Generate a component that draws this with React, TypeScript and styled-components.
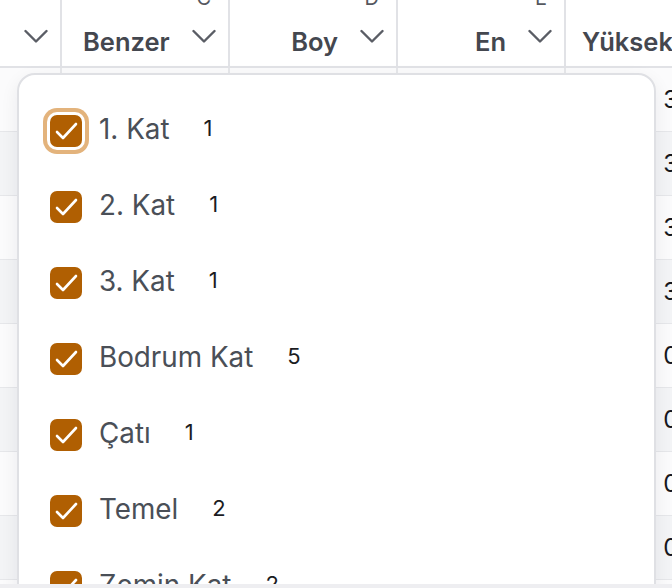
import React from 'react';
import styled, { createGlobalStyle } from 'styled-components';

const GlobalStyle = createGlobalStyle`
  html, body {
    margin: 0;
    padding: 0;
    background: #ffffff;
    overflow: hidden;
    font-family: Inter, "Noto Sans", "Liberation Sans", sans-serif;
  }
`;

interface Column {
  letter: string;
  title: string;
  width: number;
  align: 'left' | 'right';
  pad: number;
}

const columns: Column[] = [
  { letter: 'B', title: '', width: 62, align: 'right', pad: 0 },
  { letter: 'C', title: 'Benzer', width: 168, align: 'left', pad: 21 },
  { letter: 'D', title: 'Boy', width: 168, align: 'right', pad: 21 },
  { letter: 'E', title: 'En', width: 168, align: 'right', pad: 21 },
  { letter: 'F', title: 'Yükseklik', width: 168, align: 'left', pad: 16 }
];

const heights = ['3.00', '3.00', '3.00', '3.00', '0.50', '0.50', '0.50', '0.50', '0.50'];

const floors = [
  { label: '1. Kat', count: 1 },
  { label: '2. Kat', count: 1 },
  { label: '3. Kat', count: 1 },
  { label: 'Bodrum Kat', count: 5 },
  { label: 'Çatı', count: 1 },
  { label: 'Temel', count: 2 },
  { label: 'Zemin Kat', count: 2 }
];

const Page = styled.div`
  position: relative;
  width: 672px;
  height: 588px;
  overflow: hidden;
`;

const Sheet = styled.div`
  margin-top: -14px;
  width: 900px;
`;

const HeaderRow = styled.div`
  display: flex;
  border-bottom: 2px solid #e1e2e6;
`;

const HeaderCell = styled.div<{ $w: number }>`
  flex: 0 0 ${p => p.$w}px;
  min-width: 0;
  height: 80px;
  box-sizing: border-box;
  border-right: 2px solid #e1e2e6;
  display: flex;
  flex-direction: column;
  overflow: hidden;
`;

const Letter = styled.div`
  height: 24px;
  line-height: 24px;
  font-size: 20px;
  color: #55585f;
  text-align: right;
  padding-right: 17px;
`;

const TitleRow = styled.div<{ $align: 'left' | 'right'; $pad: number }>`
  flex: 1;
  display: flex;
  align-items: center;
  padding: 6px 12px 0 ${p => p.$pad}px;
  gap: 22px;
  justify-content: ${p => (p.$align === 'right' ? 'flex-end' : 'space-between')};
`;

const Title = styled.span<{ $align: 'left' | 'right' }>`
  font-size: 25.5px;
  font-weight: 600;
  color: #44474f;
  white-space: nowrap;
  flex: ${p => (p.$align === 'left' ? 1 : '0 0 auto')};
`;

const Chevron = styled.svg`
  flex: 0 0 auto;
  width: 24px;
  height: 24px;
  margin-bottom: 10px;
  color: #5a5d65;
`;

const BodyRow = styled.div<{ $alt: boolean }>`
  display: flex;
  height: 64px;
  box-sizing: border-box;
  border-bottom: 1px solid #e6e7ea;
  background: ${p => (p.$alt ? '#f3f4f6' : '#fbfbfc')};
`;

const BodyCell = styled.div<{ $w: number }>`
  flex: 0 0 ${p => p.$w}px;
  min-width: 0;
  box-sizing: border-box;
  border-right: 2px solid #e6e7ea;
  display: flex;
  align-items: center;
  justify-content: flex-end;
  padding-right: 18px;
  font-size: 24px;
  color: #16181d;
`;

const Popover = styled.div`
  position: absolute;
  top: 73px;
  left: 17px;
  width: 639px;
  height: 620px;
  box-sizing: border-box;
  background: #ffffff;
  border: 2px solid #dfe0e4;
  border-radius: 18px;
  box-shadow: 0 6px 18px rgba(20, 24, 40, 0.07);
  padding: 18px 0 0 31px;
`;

const Option = styled.label`
  display: flex;
  align-items: center;
  height: 76px;
`;

const Box = styled.span<{ $focused?: boolean }>`
  flex: 0 0 32px;
  width: 32px;
  height: 32px;
  border-radius: 7px;
  background: #b05f02;
  display: flex;
  align-items: center;
  justify-content: center;
  box-shadow: ${p =>
    p.$focused ? '0 0 0 3px #ffffff, 0 0 0 7px #e3b37c' : 'none'};
`;

const OptionLabel = styled.span`
  margin-left: 17px;
  font-size: 27.8px;
  color: #4a4f57;
  margin-top: -4px;
`;

const Count = styled.span`
  margin-left: 34px;
  font-size: 22px;
  color: #1b1c1f;
  margin-top: -7px;
`;

const ScrollTrack = styled.div`
  position: absolute;
  left: 0;
  right: 0;
  bottom: 0;
  height: 4px;
  background: #eeeef1;
`;

const ChevronIcon = () => (
  <Chevron viewBox="0 0 24 24" fill="none">
    <path
      d="M1.5 7l10.5 10.5L22.5 7"
      stroke="currentColor"
      strokeWidth="2.4"
      strokeLinecap="round"
      strokeLinejoin="round"
    />
  </Chevron>
);

export default function App() {
  return (
    <Page>
      <GlobalStyle />
      <Sheet>
        <HeaderRow>
          {columns.map(col => (
            <HeaderCell key={col.letter} $w={col.width}>
              <Letter>{col.title ? col.letter : ''}</Letter>
              <TitleRow $align={col.align} $pad={col.pad}>
                {col.title && <Title $align={col.align}>{col.title}</Title>}
                {col.letter !== 'F' && <ChevronIcon />}
              </TitleRow>
            </HeaderCell>
          ))}
        </HeaderRow>
        {heights.map((h, i) => (
          <BodyRow key={i} $alt={i % 2 === 1}>
            {columns.map(col => (
              <BodyCell key={col.letter} $w={col.width}>
                {col.letter === 'F' ? h : ''}
              </BodyCell>
            ))}
          </BodyRow>
        ))}
      </Sheet>

      <Popover>
        {floors.map((f, i) => (
          <Option key={f.label}>
            <Box $focused={i === 0}>
              <svg width="28" height="28" viewBox="0 0 28 28" fill="none">
                <path
                  d="M5 15l6 6L24 7"
                  stroke="#ffffff"
                  strokeWidth="2.6"
                  strokeLinecap="round"
                  strokeLinejoin="round"
                />
              </svg>
            </Box>
            <OptionLabel>{f.label}</OptionLabel>
            <Count>{f.count}</Count>
          </Option>
        ))}
      </Popover>
      <ScrollTrack />
    </Page>
  );
}
